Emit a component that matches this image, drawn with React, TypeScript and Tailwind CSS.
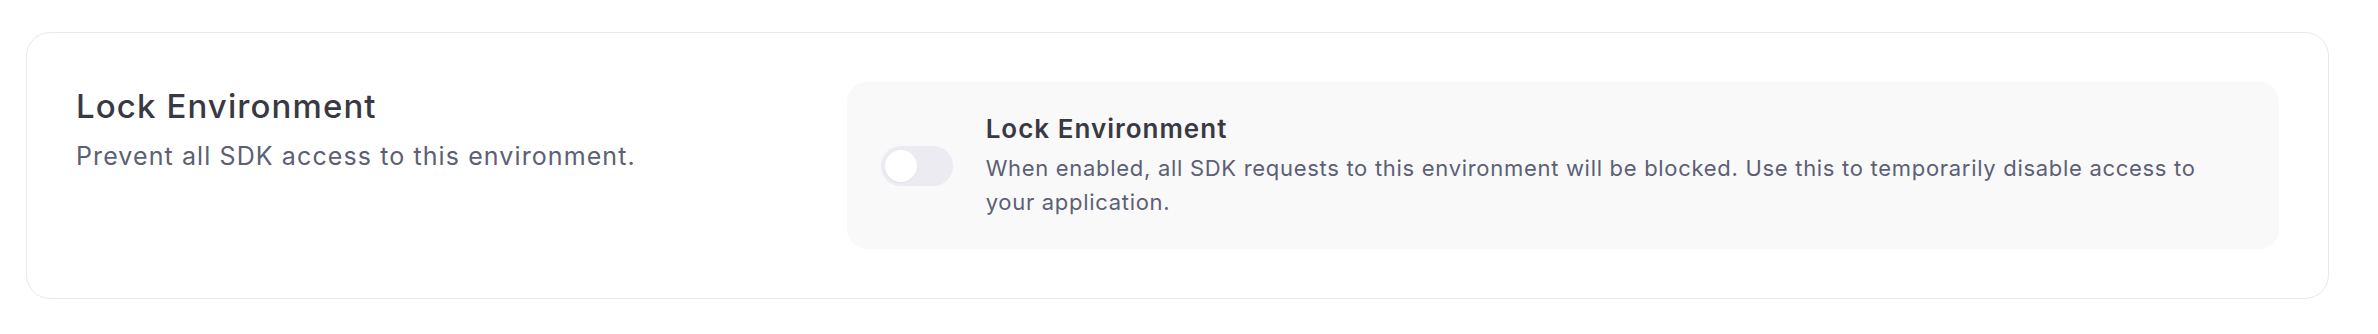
import React from "react";

export default function App() {
  return (
    <div className="min-h-[334px] w-[2378px] bg-white pt-[32px] pl-[26px]" style={{ fontFamily: "Inter, 'Noto Sans', sans-serif" }}>
      <div className="flex h-[267px] w-[2303px] rounded-[24px] border border-[#e8e8ee] bg-white p-[49px]">
        <div className="flex w-[771px] flex-col pt-[4px]">
          <h2 className="text-[33px] font-medium leading-[40px] tracking-[1.1px] text-[#393944]">Lock Environment</h2>
          <p className="mt-[14px] text-[25px] leading-[32px] tracking-[1.1px] text-[#5c6075]">Prevent all SDK access to this environment.</p>
        </div>
        <div className="flex h-[167px] w-[1433px] items-center rounded-[20px] bg-[#f9f9fa] pl-[34px] pr-[36px]">
          <button className="flex h-[40px] w-[72px] shrink-0 items-center rounded-full bg-[#ebebf1] p-[4px]">
            <span className="block h-[32px] w-[32px] rounded-full bg-white shadow-[0_1px_2px_rgba(0,0,0,0.04)]" />
          </button>
          <div className="ml-[33px] flex w-[1235px] flex-col">
            <h3 className="text-[26px] font-semibold leading-[34px] tracking-[1px] text-[#393944]">Lock Environment</h3>
            <p className="mt-[5px] text-[22px] leading-[34px] tracking-[0.7px] text-[#5c6075]">
              When enabled, all SDK requests to this environment will be blocked. Use this to temporarily disable access to your application.
            </p>
          </div>
        </div>
      </div>
    </div>
  );
}
